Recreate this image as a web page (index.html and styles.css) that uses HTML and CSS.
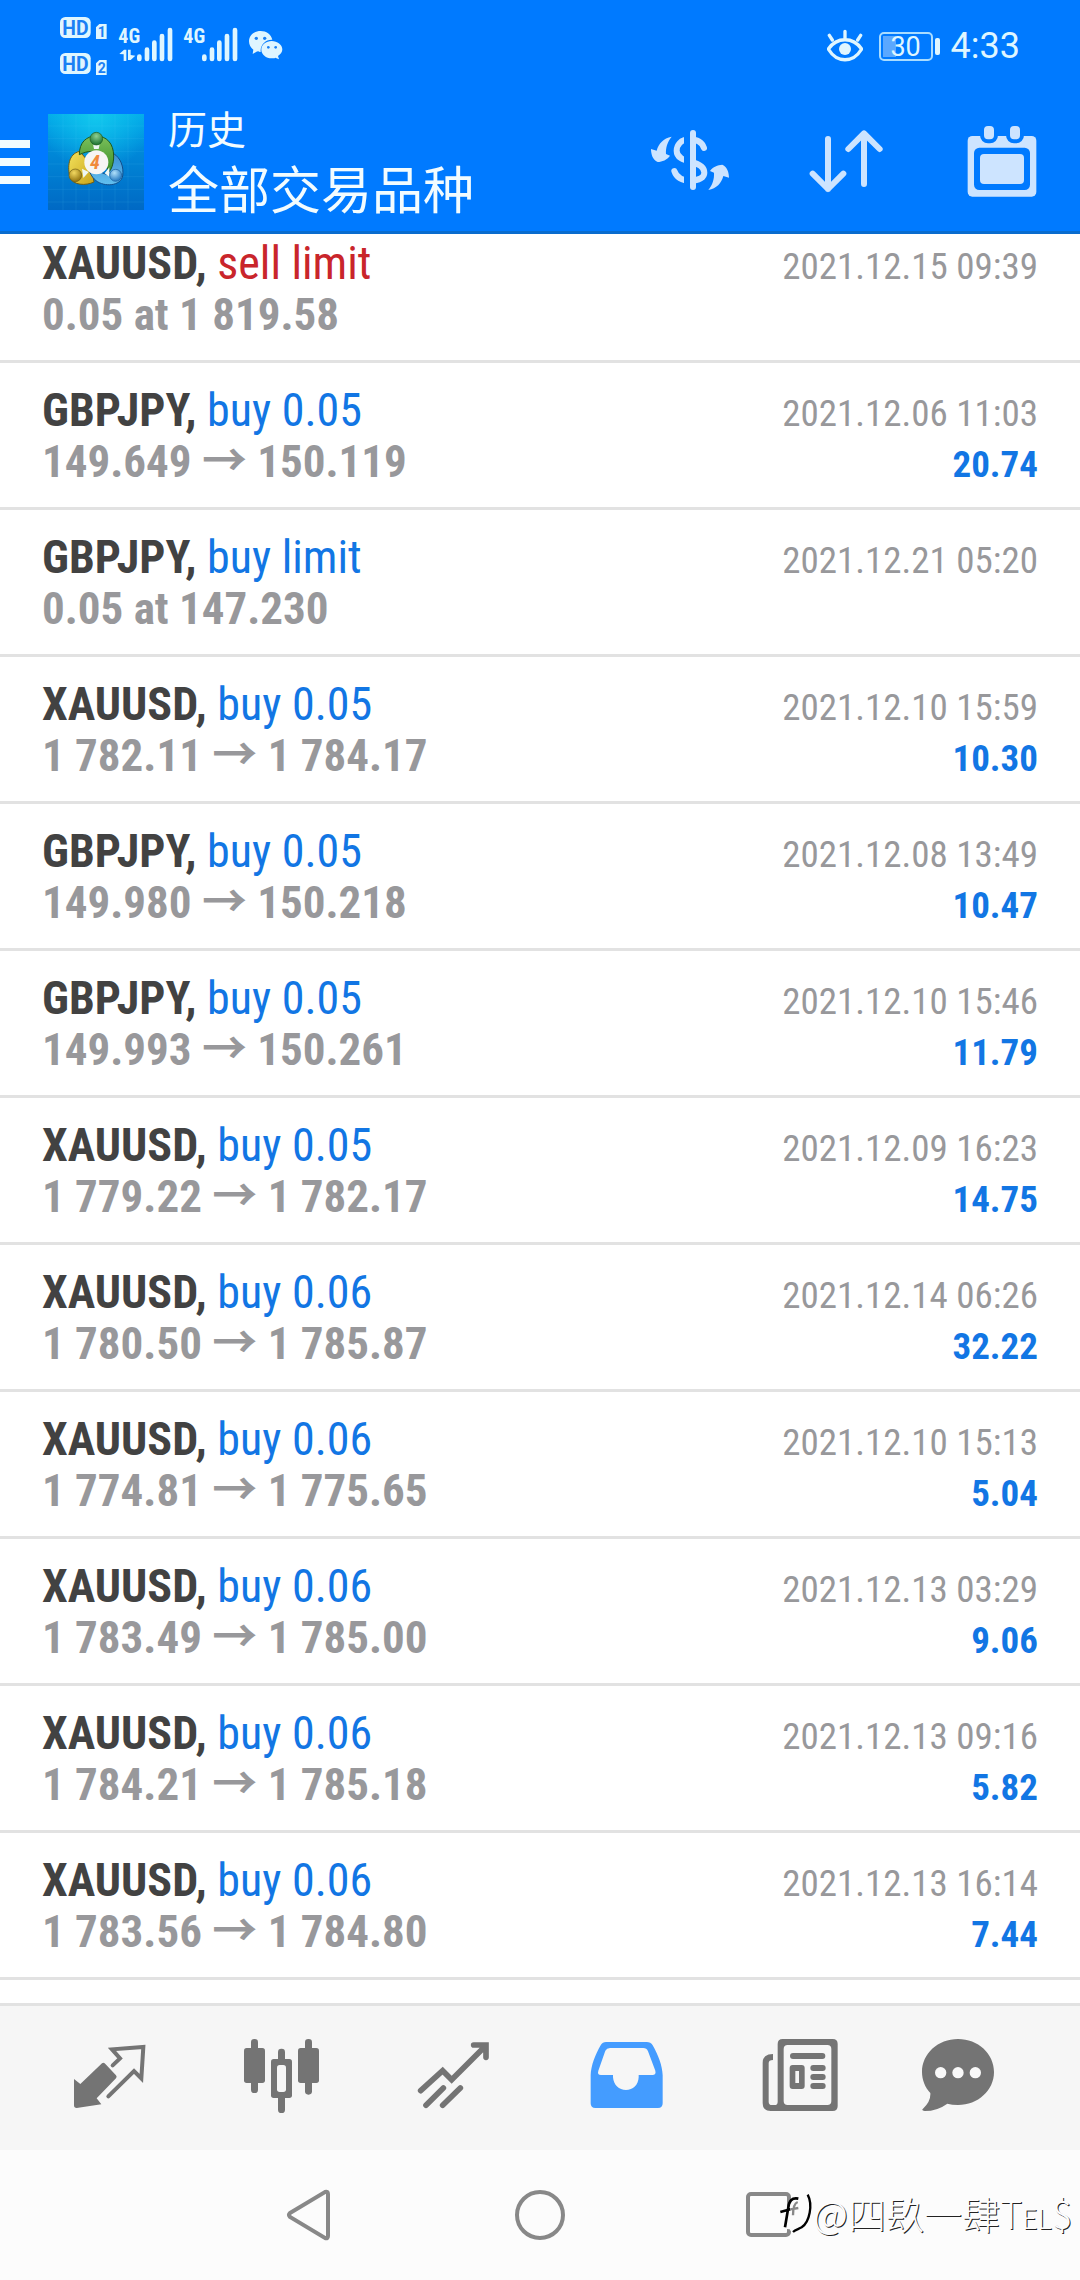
FILE: index.html
```html
<!DOCTYPE html>
<html lang="zh-CN">
<head>
<meta charset="utf-8">
<meta name="viewport" content="width=device-width, initial-scale=1">
<title>历史</title>
<link rel="stylesheet" href="styles.css">
</head>
<body>
<div class="app">
  <div class="status">
    <svg class="status-left" viewBox="0 0 900 276" aria-hidden="true">
      <rect x="180" y="51" width="92" height="63" rx="16"/>
      <text class="badge" x="187" y="104" font-size="58">HD</text>
      <rect x="180" y="159" width="92" height="63" rx="16"/>
      <text class="badge" x="187" y="212" font-size="58">HD</text>
      <path d="M288 82l10-10h22v45h-32zM288 190l10-10h22v45h-32z"/>
      <text class="badge" x="293" y="110" font-size="42">1</text>
      <text class="badge" x="293" y="218" font-size="42">2</text>
      <text class="net" x="355" y="129" font-size="60">4G</text>
      <text class="net" x="550" y="129" font-size="60">4G</text>
      <path d="M358 162l14-13h7v34h-8v-20zM384 149h8v16l14 2-14 13h-8z"/>
      <g class="bars">
        <path d="M418 170v7M441 149v28M463 128v49M486 108v69M510 90v87"/>
        <path d="M613 170v7M636 149v28M658 128v49M681 108v69M705 90v87"/>
      </g>
      <path d="M782 93c-20 0-35 14-35 31 0 11 5 19 13 25l-2 13 14-8c4 2 8 2 10 2-2-22 15-38 35-37-4-16-18-26-35-26z"/>
      <path d="M815 123c-17 0-31 12-31 26s14 26 31 26c4 0 8 0 11-2l11 5-3-10c8-5 13-12 13-20 0-14-15-25-32-25z"/>
      <g class="dots"><circle cx="769" cy="115" r="5"/><circle cx="794" cy="115" r="5"/><circle cx="805" cy="142" r="4"/><circle cx="827" cy="142" r="4"/></g>
    </svg>
    <div class="status-right">
      <svg class="eye" viewBox="144 87 108 102" aria-hidden="true">
        <path d="M148 147c26-37 74-37 100 0-26 43-74 43-100 0zM198 116V94M160 120l-9-14M236 120l9-14"/>
        <circle cx="198" cy="147" r="18"/>
      </svg>
      <span class="battery">30</span>
      <span class="time">4:33</span>
    </div>
  </div>

  <header class="appbar">
    <button class="menu" aria-label="Menu"><span></span><span></span><span></span></button>
    <svg class="logo" viewBox="0 0 288 288" aria-hidden="true">
      <defs>
        <linearGradient id="bg" x1="0" y1="0" x2="0" y2="1"><stop offset="0" stop-color="#00a8e8"/><stop offset=".4" stop-color="#0088d8"/><stop offset="1" stop-color="#0069c4"/></linearGradient>
        <radialGradient id="glow" cx=".5" cy="0" r=".6"><stop offset="0" stop-color="#12c8ee"/><stop offset="1" stop-color="#12c8ee" stop-opacity="0"/></radialGradient>
        <linearGradient id="g" x1="0" y1="0" x2="0" y2="1"><stop offset="0" stop-color="#7cc05c"/><stop offset="1" stop-color="#3a9028"/></linearGradient>
        <linearGradient id="y" x1="0" y1="0" x2="1" y2="1"><stop offset="0" stop-color="#f3e25c"/><stop offset="1" stop-color="#c9a41c"/></linearGradient>
        <linearGradient id="b" x1="0" y1="0" x2="0" y2="1"><stop offset="0" stop-color="#3a8ed0"/><stop offset="1" stop-color="#62c0f0"/></linearGradient>
        <radialGradient id="gb" cx=".5" cy=".3" r=".7"><stop offset="0" stop-color="#8fd092"/><stop offset="1" stop-color="#18702c"/></radialGradient>
        <radialGradient id="yb" cx=".4" cy=".3" r=".7"><stop offset="0" stop-color="#f2d860"/><stop offset="1" stop-color="#937410"/></radialGradient>
        <radialGradient id="bb" cx=".4" cy=".3" r=".7"><stop offset="0" stop-color="#b0e0fa"/><stop offset="1" stop-color="#2478c0"/></radialGradient>
      </defs>
      <rect width="288" height="288" fill="url(#bg)"/>
      <rect width="288" height="288" fill="url(#glow)"/>
      <path d="M45 0v288M84 0v288M123 0v288M162 0v288M201 0v288M240 0v288M0 36h288M0 74h288M0 112h288M0 150h288M0 188h288M0 226h288M0 264h288" stroke="#6cd0ff" stroke-opacity=".16" stroke-width="2"/>
      <path d="M95 112C60 120 58 160 66 190c8 24 48 26 72 14l-10-54z" fill="url(#y)" stroke="#6e5c14" stroke-width="3"/>
      <path d="M196 118c22 14 32 40 28 68-6 30-54 34-80 14-14-12-20-26-22-38l56 20c12-16 20-40 18-64z" fill="url(#b)" stroke="#124e8c" stroke-width="3"/>
      <path d="M94 122C94 84 116 66 145 66c30 0 52 22 52 60 0 24-8 44-14 46l-30-50c-12-14-34-12-59 0z" fill="url(#g)" stroke="#20581c" stroke-width="3"/>
      <path d="M135 91h20l-3 14h-14zM102 164l20 10-16 18zM184 160v28l-14-10z" fill="#eef7f4"/>
      <circle cx="145" cy="74" r="19" fill="url(#gb)" stroke="#1c5c20" stroke-width="2"/>
      <circle cx="82" cy="184" r="19" fill="url(#yb)" stroke="#6e5c14" stroke-width="2"/>
      <circle cx="203" cy="184" r="18" fill="url(#bb)" stroke="#1a5c9c" stroke-width="2"/>
      <circle cx="145" cy="145" r="36" fill="#f6f5f4"/>
      <text class="logo-digit" x="126" y="166" font-size="60">4</text>
    </svg>
    <div class="titles">
      <h1>历史</h1>
      <p>全部交易品种</p>
    </div>
    <div class="actions">
      <button aria-label="Symbols">
        <svg viewBox="66 42 288 288" aria-hidden="true">
          <path class="stroke s18" d="M252 144c-6-18-20-26-44-26-26 0-38 18-38 34 0 20 18 28 44 34 24 6 39 14 39 32 0 14-16 24-41 24-26 0-42-8-49-29"/>
          <path d="M192 95h18v173h-18z" fill="#007aff"/>
          <path class="stroke s18" d="M219 99v162"/>
          <path class="fill" d="M155 110c-25 5-39 20-45 42l-17-5c0 15 5 33 20 39 14-1 28-6 37-19l-12-5c-1-19 4-36 17-52z"/>
          <path class="fill" transform="rotate(180 210 190)" d="M155 110c-25 5-39 20-45 42l-17-5c0 15 5 33 20 39 14-1 28-6 37-19l-12-5c-1-19 4-36 17-52z"/>
        </svg>
      </button>
      <button aria-label="Sort">
        <svg viewBox="534 42 288 288" aria-hidden="true">
          <path class="stroke s18" d="M624 117v150M578 221l46 46 46-46M732 252V102M685 147l47-47 47 47"/>
        </svg>
      </button>
      <button aria-label="Calendar">
        <svg viewBox="1002 42 288 288" aria-hidden="true">
          <rect class="fill" x="1043" y="108" width="206" height="182" rx="14"/>
          <rect x="1062" y="143" width="168" height="127" rx="16" fill="#007aff"/>
          <rect class="fill" x="1080" y="162" width="132" height="90" rx="12"/>
          <rect class="fill" x="1086" y="72" width="42" height="52" rx="18" stroke="#007aff" stroke-width="12"/>
          <rect class="fill" x="1164" y="72" width="42" height="52" rx="18" stroke="#007aff" stroke-width="12"/>
        </svg>
      </button>
    </div>
  </header>

  <main class="history">
    <ul class="deals">
      <li class="deal"><div class="line"><span class="symbol">XAUUSD, <span class="sell">sell limit</span></span><time>2021.12.15 09:39</time></div><div class="line"><span class="price">0.05 at 1 819.58</span></div></li>
      <li class="deal"><div class="line"><span class="symbol">GBPJPY, <span class="buy">buy 0.05</span></span><time>2021.12.06 11:03</time></div><div class="line"><span class="price">149.649 <span class="to">→</span> 150.119</span><span class="profit">20.74</span></div></li>
      <li class="deal"><div class="line"><span class="symbol">GBPJPY, <span class="buy">buy limit</span></span><time>2021.12.21 05:20</time></div><div class="line"><span class="price">0.05 at 147.230</span></div></li>
      <li class="deal"><div class="line"><span class="symbol">XAUUSD, <span class="buy">buy 0.05</span></span><time>2021.12.10 15:59</time></div><div class="line"><span class="price">1 782.11 <span class="to">→</span> 1 784.17</span><span class="profit">10.30</span></div></li>
      <li class="deal"><div class="line"><span class="symbol">GBPJPY, <span class="buy">buy 0.05</span></span><time>2021.12.08 13:49</time></div><div class="line"><span class="price">149.980 <span class="to">→</span> 150.218</span><span class="profit">10.47</span></div></li>
      <li class="deal"><div class="line"><span class="symbol">GBPJPY, <span class="buy">buy 0.05</span></span><time>2021.12.10 15:46</time></div><div class="line"><span class="price">149.993 <span class="to">→</span> 150.261</span><span class="profit">11.79</span></div></li>
      <li class="deal"><div class="line"><span class="symbol">XAUUSD, <span class="buy">buy 0.05</span></span><time>2021.12.09 16:23</time></div><div class="line"><span class="price">1 779.22 <span class="to">→</span> 1 782.17</span><span class="profit">14.75</span></div></li>
      <li class="deal"><div class="line"><span class="symbol">XAUUSD, <span class="buy">buy 0.06</span></span><time>2021.12.14 06:26</time></div><div class="line"><span class="price">1 780.50 <span class="to">→</span> 1 785.87</span><span class="profit">32.22</span></div></li>
      <li class="deal"><div class="line"><span class="symbol">XAUUSD, <span class="buy">buy 0.06</span></span><time>2021.12.10 15:13</time></div><div class="line"><span class="price">1 774.81 <span class="to">→</span> 1 775.65</span><span class="profit">5.04</span></div></li>
      <li class="deal"><div class="line"><span class="symbol">XAUUSD, <span class="buy">buy 0.06</span></span><time>2021.12.13 03:29</time></div><div class="line"><span class="price">1 783.49 <span class="to">→</span> 1 785.00</span><span class="profit">9.06</span></div></li>
      <li class="deal"><div class="line"><span class="symbol">XAUUSD, <span class="buy">buy 0.06</span></span><time>2021.12.13 09:16</time></div><div class="line"><span class="price">1 784.21 <span class="to">→</span> 1 785.18</span><span class="profit">5.82</span></div></li>
      <li class="deal"><div class="line"><span class="symbol">XAUUSD, <span class="buy">buy 0.06</span></span><time>2021.12.13 16:14</time></div><div class="line"><span class="price">1 783.56 <span class="to">→</span> 1 784.80</span><span class="profit">7.44</span></div></li>
    </ul>
  </main>

  <nav class="tabs">
    <button aria-label="Quotes">
      <svg viewBox="6 0 288 288" aria-hidden="true">
        <path d="M126 100q4-4 8 0l34 36q4 4 0 9l-58 60 14 18-74 11q-8 0-8-8v-79l19 15z"/>
        <path class="line-icon" stroke-width="12" d="M158 106l22-21-24-27 94-7-6 94-22-22-77 76" stroke-linecap="round"/>
      </svg>
    </button>
    <button aria-label="Charts">
      <svg viewBox="522 0 288 288" aria-hidden="true">
        <rect x="552" y="54" width="63" height="105" rx="8"/><rect x="573" y="27" width="21" height="162" rx="10"/>
        <rect x="714" y="54" width="63" height="105" rx="8"/><rect x="735" y="27" width="21" height="167" rx="10"/>
        <rect x="633" y="87" width="63" height="117" rx="8"/><rect x="654" y="56" width="21" height="193" rx="10"/>
        <rect x="651" y="105" width="27" height="81" rx="8" fill="#f6f6f6"/>
      </svg>
    </button>
    <button aria-label="Trade">
      <svg viewBox="1038 0 288 288" aria-hidden="true">
        <path class="line-icon" stroke-width="17" stroke-linecap="round" d="M1082 182l66-60 27 27 102-102M1241 45h37v37M1098 226l52-52M1148 226l53-52"/>
      </svg>
    </button>
    <button class="active" aria-label="History" aria-current="page">
      <svg viewBox="24 0 288 288" aria-hidden="true">
        <path fill-rule="evenodd" d="M108 36h122q12 0 18 10c16 28 29 60 30 90v84q0 14-14 14H76q-14 0-14-14v-84c1-30 14-62 30-90q6-10 16-10zM120 54q-10 0-14 8L85 122q-4 13 8 13h36v7c2 24 18 38 39 38s37-14 38-38v-7h41q12 0 9-13l-22-58q-4-10-14-10z"/>
      </svg>
    </button>
    <button aria-label="News">
      <svg viewBox="540 0 288 288" aria-hidden="true">
        <path fill-rule="evenodd" d="M638 27h150q15 0 15 15v186q0 15-15 15H602q-24 0-24-24V98q0-26 31-26v18q-13 0-13 10v115q0 10 10 10h8q9 0 9-10V42q0-15 15-15zM653 45q-12 0-12 12v156q0 12 12 12h119q12 0 12-12V57q0-12-12-12z"/>
        <rect x="660" y="69" width="106" height="18" rx="9"/>
        <path fill-rule="evenodd" d="M668 105h27q9 0 9 9v54q0 9-9 9h-27q-9 0-9-9v-54q0-9 9-9zM676 123v36h11v-36z"/>
        <rect x="721" y="105" width="46" height="18" rx="9"/><rect x="721" y="132" width="46" height="18" rx="9"/><rect x="721" y="159" width="46" height="18" rx="9"/>
      </svg>
    </button>
    <button aria-label="Messages">
      <svg viewBox="1056 0 288 288" aria-hidden="true">
        <path fill-rule="evenodd" d="M1164 27c60 0 108 44 108 99s-48 99-108 99q-18 0-32-4-30 22-68 22-11-2-5-7 24-22 22-47c-16-17-25-40-25-63 0-55 48-99 108-99z"/>
        <g fill="#f9f9f9"><circle cx="1112" cy="128" r="17"/><circle cx="1164" cy="128" r="17"/><circle cx="1216" cy="128" r="17"/></g>
      </svg>
    </button>
  </nav>

  <div class="system">
    <button aria-label="Back"><svg viewBox="0 0 60 60" aria-hidden="true"><path d="M10 28L45 7Q48 6 48 9V51Q48 54 45 53L10 32Q8 30 10 28Z"/></svg></button>
    <button aria-label="Home"><svg viewBox="0 0 60 60" aria-hidden="true"><circle cx="30" cy="30" r="23"/></svg></button>
    <button aria-label="Recent apps"><svg viewBox="0 0 60 60" aria-hidden="true"><rect x="8" y="9" width="41" height="41" rx="3"/></svg></button>
    <div class="watermark">
      <svg viewBox="0 0 120 150" aria-hidden="true">
        <path d="M10 120C50 110 40 50 62 34 108 10 122 44 110 92 98 120 70 128 56 134L50 124z" fill="#fcfcfc"/>
        <path d="M104 20c16 30 6 82-18 98-10 6-18 6-26 14" fill="none" stroke="#000" stroke-width="7"/>
        <path d="M76 32c-20-4-28 8-30 26l-10 60M22 72l30-8" fill="none" stroke="#000" stroke-width="8"/>
        <path d="M74 42c-10 4-14 18-14 40M52 64l24-4" fill="none" stroke="#888" stroke-width="7"/>
      </svg>
      <span>@四镹一肆<small>Tel</small>$</span>
    </div>
  </div>
</div>
</body>
</html>
```
FILE: styles.css
```css
* { box-sizing: border-box; }

body {
  margin: 0;
  background: #fff;
  font-family: "Roboto Condensed", "Liberation Sans Narrow", Roboto, "Noto Sans CJK SC", sans-serif;
}

button {
  display: block;
  padding: 0;
  border: 0;
  background: none;
}

svg { display: block; }

.app {
  display: flex;
  flex-direction: column;
  min-height: 100vh;
}

/* Status bar */
.status {
  display: flex;
  justify-content: space-between;
  height: 92px;
  padding-right: 60px;
  background: #007aff;
  color: #dff6ff;
  font-family: Roboto, sans-serif;
}

.status-left { width: 300px; height: 92px; fill: #dff6ff; }
.badge { fill: #1a80f4; font-weight: 700; }
.net { font-family: "Roboto Condensed", "Liberation Sans Narrow", sans-serif; font-weight: 700; }
.bars path { stroke: #dff6ff; stroke-width: 14; stroke-linecap: round; }
.dots { fill: #1a80f4; }

.status-right { display: flex; align-items: center; }
.eye { width: 36px; height: 34px; fill: #dff6ff; }
.eye path { fill: none; stroke: #dff6ff; stroke-width: 10; stroke-linecap: round; }

.battery {
  position: relative;
  width: 54px;
  height: 29px;
  margin: 0 18px 0 16px;
  border: 2px solid #a9dcff;
  border-radius: 5px;
  background: linear-gradient(#5ba8ff, #5ba8ff) 2px 2px / 13px 21px no-repeat;
  font-size: 27px;
  line-height: 26px;
  text-align: center;
}
.battery::after {
  content: "";
  position: absolute;
  top: 4px;
  right: -9px;
  width: 5px;
  height: 17px;
  border-radius: 2px;
  background: #dff6ff;
}
.time { font-size: 36px; }

/* App bar */
.appbar {
  display: flex;
  align-items: center;
  height: 142px;
  border-bottom: 3px solid #0a6cce;
  background: #007aff;
  color: #f2fcff;
}
.menu { display: grid; gap: 10px; width: 48px; }
.menu span { width: 30px; height: 8px; background: #f2fcff; }
.logo { width: 96px; height: 96px; }
.logo-digit { fill: #f08a3c; font-weight: 700; font-style: italic; }
.titles { flex: 1; padding: 0 0 6px 24px; font-family: "Noto Sans CJK SC", sans-serif; white-space: nowrap; }
.titles h1 { margin: 0; font-size: 39px; font-weight: 400; line-height: 56px; }
.titles p { margin: 0; font-size: 51px; line-height: 64px; }
.actions { display: flex; gap: 60px; padding-right: 30px; }
.actions svg { width: 96px; height: 96px; }
.fill { fill: #cde4ff; }
.stroke { fill: none; stroke: #cde4ff; stroke-linecap: round; stroke-linejoin: round; }
.s18 { stroke-width: 18; }

/* Deal list */
.history { flex: 1; overflow: hidden; }
.deals { margin: -18px 0 0; padding: 0; list-style: none; }
.deal { padding: 22px 42px 20px; border-bottom: 3px solid #e2e2e2; }
.line {
  display: flex;
  align-items: baseline;
  justify-content: space-between;
  height: 51px;
  line-height: 51px;
  white-space: nowrap;
}
.symbol { color: #424242; font-size: 46px; font-weight: 700; }
.symbol span { font-weight: 400; }
.symbol .buy { color: #1276e4; }
.symbol .sell { color: #c9252b; }
.price { color: #98989b; font-size: 45px; font-weight: 700; }
.to { font-family: "Noto Sans CJK SC", sans-serif; line-height: 40px; }
time, .profit { font-size: 37px; line-height: 44px; }
time { color: #98989b; }
.profit { color: #1276e4; font-weight: 700; }

/* Tabs */
.tabs {
  display: grid;
  grid-template-columns: repeat(6, 1fr);
  justify-items: center;
  padding: 24px;
  border-top: 3px solid #e2e2e2;
  background: #f6f6f6;
}
.tabs svg { width: 96px; height: 96px; fill: #747474; }
.tabs .active svg { fill: #449cff; }
.tabs .line-icon { fill: none; stroke: #747474; }

/* System navigation */
.system {
  position: relative;
  display: grid;
  grid-template-columns: repeat(3, 230px);
  justify-content: center;
  justify-items: center;
  align-items: center;
  height: 130px;
  background: #fcfcfc;
}
.system button svg { width: 60px; height: 60px; fill: none; stroke: #888; stroke-width: 4; }
.watermark {
  position: absolute;
  right: 8px;
  bottom: 42px;
  display: flex;
  align-items: center;
  color: #fdfdfd;
  font-family: "Noto Sans CJK SC", sans-serif;
  font-size: 38px;
  font-weight: 300;
  line-height: 50px;
  text-shadow: 1px 1px 0 #222;
}
.watermark svg { width: 40px; height: 50px; }
.watermark small { font-size: 38px; font-variant: small-caps; }
```
